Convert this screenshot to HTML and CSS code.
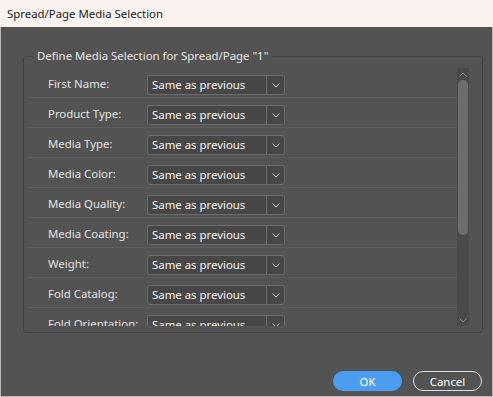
FILE: index.html
```html
<!DOCTYPE html>
<html lang="en">
  <head>
    <meta charset="UTF-8" />
    <title>Spread/Page Media Selection</title>
    <link rel="stylesheet" href="styles.css">
  </head>

  <body>
    <div class="dialog">
      <div class="titlebar">Spread/Page Media Selection</div>
      <div class="dialog-body">
        <fieldset class="group">
          <legend class="group-title">Define Media Selection for Spread/Page "1"</legend>
          <div class="scroll-area">
            <ul class="rows">
              <li class="row">
                <span class="row-label">First Name:</span>
                <div class="select"><span class="select-value">Same as previous</span><span class="select-btn"><svg width="8" height="5" viewBox="0 0 8 5"><path d="M0.5 0.5 L4 4 L7.5 0.5" /></svg></span></div>
              </li>
              <li class="row">
                <span class="row-label">Product Type:</span>
                <div class="select"><span class="select-value">Same as previous</span><span class="select-btn"><svg width="8" height="5" viewBox="0 0 8 5"><path d="M0.5 0.5 L4 4 L7.5 0.5" /></svg></span></div>
              </li>
              <li class="row">
                <span class="row-label">Media Type:</span>
                <div class="select"><span class="select-value">Same as previous</span><span class="select-btn"><svg width="8" height="5" viewBox="0 0 8 5"><path d="M0.5 0.5 L4 4 L7.5 0.5" /></svg></span></div>
              </li>
              <li class="row">
                <span class="row-label">Media Color:</span>
                <div class="select"><span class="select-value">Same as previous</span><span class="select-btn"><svg width="8" height="5" viewBox="0 0 8 5"><path d="M0.5 0.5 L4 4 L7.5 0.5" /></svg></span></div>
              </li>
              <li class="row">
                <span class="row-label">Media Quality:</span>
                <div class="select"><span class="select-value">Same as previous</span><span class="select-btn"><svg width="8" height="5" viewBox="0 0 8 5"><path d="M0.5 0.5 L4 4 L7.5 0.5" /></svg></span></div>
              </li>
              <li class="row">
                <span class="row-label">Media Coating:</span>
                <div class="select"><span class="select-value">Same as previous</span><span class="select-btn"><svg width="8" height="5" viewBox="0 0 8 5"><path d="M0.5 0.5 L4 4 L7.5 0.5" /></svg></span></div>
              </li>
              <li class="row">
                <span class="row-label">Weight:</span>
                <div class="select"><span class="select-value">Same as previous</span><span class="select-btn"><svg width="8" height="5" viewBox="0 0 8 5"><path d="M0.5 0.5 L4 4 L7.5 0.5" /></svg></span></div>
              </li>
              <li class="row">
                <span class="row-label">Fold Catalog:</span>
                <div class="select"><span class="select-value">Same as previous</span><span class="select-btn"><svg width="8" height="5" viewBox="0 0 8 5"><path d="M0.5 0.5 L4 4 L7.5 0.5" /></svg></span></div>
              </li>
              <li class="row">
                <span class="row-label">Fold Orientation:</span>
                <div class="select"><span class="select-value">Same as previous</span><span class="select-btn"><svg width="8" height="5" viewBox="0 0 8 5"><path d="M0.5 0.5 L4 4 L7.5 0.5" /></svg></span></div>
              </li>
            </ul>
            <div class="scrollbar">
              <span class="scroll-arrow"><svg width="8" height="5" viewBox="0 0 8 5"><path d="M0.5 4.5 L4 1 L7.5 4.5" /></svg></span>
              <div class="scroll-track"><div class="scroll-thumb"></div></div>
              <span class="scroll-arrow"><svg width="8" height="5" viewBox="0 0 8 5"><path d="M0.5 0.5 L4 4 L7.5 0.5" /></svg></span>
            </div>
          </div>
        </fieldset>
        <div class="actions">
          <button class="btn btn-primary">OK</button>
          <button class="btn btn-secondary">Cancel</button>
        </div>
      </div>
    </div>
  </body>
</html>
```

FILE: styles.css
```css
html,
body {
  margin: 0;
  padding: 0;
}

body {
  font-family: "Noto Sans", sans-serif;
  font-size: 11.4px;
  background: #535353;
}

.dialog {
  width: 493px;
  height: 397px;
  display: flex;
  flex-direction: column;
}

.titlebar {
  height: 27px;
  line-height: 27px;
  padding-left: 7px;
  background: #faf2ef;
  color: #1b1b1b;
  font-size: 11.4px;
}

.dialog-body {
  flex: 1;
  display: flex;
  flex-direction: column;
  padding: 21px 9px 5px 22px;
  background: #535353;
  border: solid 1px #b9b9b9;
  border-top: none;
}

.group {
  margin: 0;
  padding: 4px 13px 6px 4px;
  min-width: 0;
  border: solid 1px #424242;
  border-radius: 3px;
}

.group-title {
  margin-left: 5px;
  padding: 0 4px;
  line-height: 16px;
  color: #e6e6e6;
}

.scroll-area {
  display: flex;
  height: 258px;
  overflow: hidden;
}

.rows {
  flex: 1;
  margin: 0;
  padding: 0;
  list-style-type: none;
}

.row {
  display: flex;
  align-items: center;
  height: 30px;
  box-sizing: border-box;
  padding: 5px 0 0 20px;
  border-bottom: solid 1px #5d5d5d;
}

.row-label {
  width: 99px;
  flex-shrink: 0;
  margin-top: -4px;
  color: #e2e2e2;
  white-space: nowrap;
}

.select {
  display: flex;
  width: 138px;
  height: 20px;
  box-sizing: border-box;
  border: solid 1px #6c6c6c;
  border-radius: 3px;
  background: #474747;
}

.select-value {
  flex: 1;
  padding-left: 4px;
  line-height: 18px;
  color: #f2f2f2;
  white-space: nowrap;
}

.select-btn {
  display: flex;
  align-items: center;
  justify-content: center;
  width: 17px;
  border-left: solid 1px #6c6c6c;
}

.select-btn path,
.scroll-arrow path {
  fill: none;
  stroke: #cfcfcf;
  stroke-width: 1;
}

.scrollbar {
  display: flex;
  flex-direction: column;
  width: 12px;
  background: #4a4a4a;
}

.scroll-arrow {
  display: flex;
  align-items: center;
  justify-content: center;
  height: 12px;
}

.scroll-arrow path {
  stroke: #8a8a8a;
}

.scroll-track {
  flex: 1;
  padding: 0 1px;
}

.scroll-thumb {
  height: 155px;
  border-radius: 5px;
  background: #6d6d6d;
}

.actions {
  margin-top: auto;
  display: flex;
  justify-content: flex-end;
  gap: 11px;
  padding-right: 1px;
}

.btn {
  width: 69px;
  height: 20px;
  padding: 0;
  border-radius: 10px;
  font-family: "Noto Sans", sans-serif;
  font-size: 11.4px;
  color: #ffffff;
  cursor: pointer;
}

.btn-primary {
  border: none;
  background: #4a9df0;
}

.btn-secondary {
  border: solid 1.5px #dcdcdc;
  background: transparent;
}
```
